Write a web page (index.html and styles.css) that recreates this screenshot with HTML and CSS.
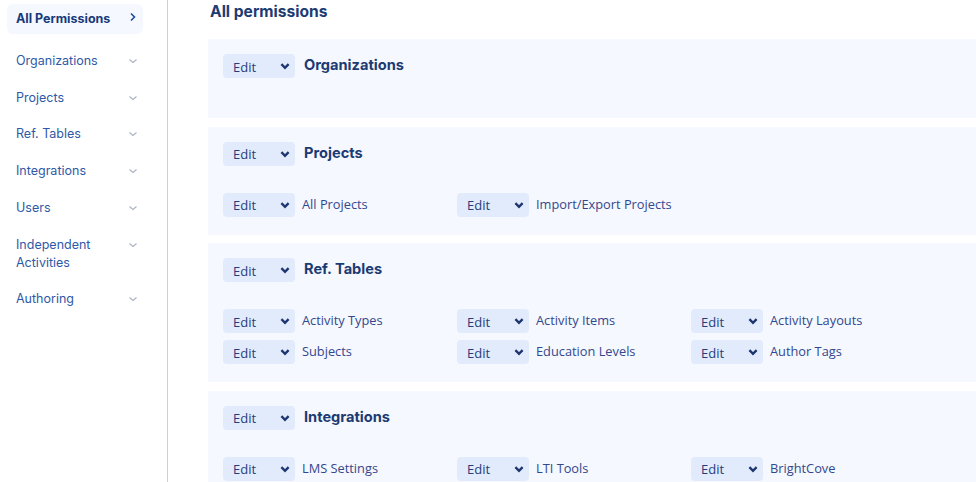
FILE: index.html
```html
<!DOCTYPE html>
<html>
<head>
<meta charset="utf-8">
<link rel="stylesheet" href="styles.css">
</head>
<body>
<div class="layout">
  <aside class="sidebar">
    <div class="nav-item active"><span>All Permissions</span><svg class="chev-r" viewBox="0 0 10 10"><path d="M3 1.5 L6.5 5 L3 8.5" /></svg></div>
    <div class="nav-item"><span>Organizations</span><svg class="chev-d" viewBox="0 0 10 10"><path d="M1.5 3.5 L5 6.5 L8.5 3.5" /></svg></div>
    <div class="nav-item"><span>Projects</span><svg class="chev-d" viewBox="0 0 10 10"><path d="M1.5 3.5 L5 6.5 L8.5 3.5" /></svg></div>
    <div class="nav-item"><span>Ref. Tables</span><svg class="chev-d" viewBox="0 0 10 10"><path d="M1.5 3.5 L5 6.5 L8.5 3.5" /></svg></div>
    <div class="nav-item"><span>Integrations</span><svg class="chev-d" viewBox="0 0 10 10"><path d="M1.5 3.5 L5 6.5 L8.5 3.5" /></svg></div>
    <div class="nav-item"><span>Users</span><svg class="chev-d" viewBox="0 0 10 10"><path d="M1.5 3.5 L5 6.5 L8.5 3.5" /></svg></div>
    <div class="nav-item"><span>Independent<br>Activities</span><svg class="chev-d" viewBox="0 0 10 10"><path d="M1.5 3.5 L5 6.5 L8.5 3.5" /></svg></div>
    <div class="nav-item"><span>Authoring</span><svg class="chev-d" viewBox="0 0 10 10"><path d="M1.5 3.5 L5 6.5 L8.5 3.5" /></svg></div>
  </aside>
  <main class="main">
    <h1 class="title">All permissions</h1>

    <section class="card card-empty">
      <div class="card-head">
        <div class="select"><span>Edit</span><svg viewBox="0 0 10 10"><path d="M2 3.5 L5 6.5 L8 3.5" /></svg></div>
        <h2>Organizations</h2>
      </div>
    </section>

    <section class="card">
      <div class="card-head">
        <div class="select"><span>Edit</span><svg viewBox="0 0 10 10"><path d="M2 3.5 L5 6.5 L8 3.5" /></svg></div>
        <h2>Projects</h2>
      </div>
      <div class="grid">
        <div class="perm"><div class="select"><span>Edit</span><svg viewBox="0 0 10 10"><path d="M2 3.5 L5 6.5 L8 3.5" /></svg></div><span class="label">All Projects</span></div>
        <div class="perm"><div class="select"><span>Edit</span><svg viewBox="0 0 10 10"><path d="M2 3.5 L5 6.5 L8 3.5" /></svg></div><span class="label">Import/Export Projects</span></div>
      </div>
    </section>

    <section class="card">
      <div class="card-head">
        <div class="select"><span>Edit</span><svg viewBox="0 0 10 10"><path d="M2 3.5 L5 6.5 L8 3.5" /></svg></div>
        <h2>Ref. Tables</h2>
      </div>
      <div class="grid">
        <div class="perm"><div class="select"><span>Edit</span><svg viewBox="0 0 10 10"><path d="M2 3.5 L5 6.5 L8 3.5" /></svg></div><span class="label">Activity Types</span></div>
        <div class="perm"><div class="select"><span>Edit</span><svg viewBox="0 0 10 10"><path d="M2 3.5 L5 6.5 L8 3.5" /></svg></div><span class="label">Activity Items</span></div>
        <div class="perm"><div class="select"><span>Edit</span><svg viewBox="0 0 10 10"><path d="M2 3.5 L5 6.5 L8 3.5" /></svg></div><span class="label">Activity Layouts</span></div>
        <div class="perm"><div class="select"><span>Edit</span><svg viewBox="0 0 10 10"><path d="M2 3.5 L5 6.5 L8 3.5" /></svg></div><span class="label">Subjects</span></div>
        <div class="perm"><div class="select"><span>Edit</span><svg viewBox="0 0 10 10"><path d="M2 3.5 L5 6.5 L8 3.5" /></svg></div><span class="label">Education Levels</span></div>
        <div class="perm"><div class="select"><span>Edit</span><svg viewBox="0 0 10 10"><path d="M2 3.5 L5 6.5 L8 3.5" /></svg></div><span class="label">Author Tags</span></div>
      </div>
    </section>

    <section class="card">
      <div class="card-head">
        <div class="select"><span>Edit</span><svg viewBox="0 0 10 10"><path d="M2 3.5 L5 6.5 L8 3.5" /></svg></div>
        <h2>Integrations</h2>
      </div>
      <div class="grid">
        <div class="perm"><div class="select"><span>Edit</span><svg viewBox="0 0 10 10"><path d="M2 3.5 L5 6.5 L8 3.5" /></svg></div><span class="label">LMS Settings</span></div>
        <div class="perm"><div class="select"><span>Edit</span><svg viewBox="0 0 10 10"><path d="M2 3.5 L5 6.5 L8 3.5" /></svg></div><span class="label">LTI Tools</span></div>
        <div class="perm"><div class="select"><span>Edit</span><svg viewBox="0 0 10 10"><path d="M2 3.5 L5 6.5 L8 3.5" /></svg></div><span class="label">BrightCove</span></div>
      </div>
    </section>
  </main>
</div>
</body>
</html>
```

FILE: styles.css
```css
* { box-sizing: border-box; }
html, body { margin: 0; padding: 0; background: #fff; }
body { width: 976px; height: 482px; overflow: hidden; font-family: "Inter", "Noto Sans", sans-serif; }

.layout { display: flex; align-items: stretch; height: 482px; }

.sidebar {
  width: 168px;
  flex: none;
  border-right: 1px solid #cfcfcf;
  padding: 4px 0 0 7px;
}
.nav-item {
  width: 136px;
  display: flex;
  justify-content: space-between;
  align-items: flex-start;
  padding: 9px 5px 10px 9px;
  font-size: 12.5px;
  line-height: 17.8px;
  color: #2e59a8;
}
.nav-item.active {
  background: #f5f8fe;
  border-radius: 6px;
  font-weight: 700;
  color: #173a7a;
  padding: 6px 5px 6px 9px;
  margin-bottom: 9px;
}
.nav-item svg { width: 10px; height: 10px; margin-top: 4px; fill: none; }
.chev-r { stroke: #1f4aa0; stroke-width: 1.6; margin-top: 2px !important; }
.chev-d { stroke: #a9b3c3; stroke-width: 1.1; }

.main { flex: 1; padding-left: 40px; min-width: 0; }
.title {
  margin: 0;
  font-size: 15.6px;
  line-height: 22px;
  font-weight: 700;
  color: #1d3b73;
  padding: 1px 0 0 2px;
  height: 39px;
}

.card {
  background: #f5f8ff;
  padding: 15px 15px 18px;
  margin-bottom: 8.5px;
  width: 800px;
}
.card-empty { padding-bottom: 40px; }

.card-head { display: flex; align-items: center; gap: 9px; }
.card-head h2 {
  margin: 0;
  font-size: 14.6px;
  line-height: 20px;
  font-weight: 700;
  color: #1d3b73;
  padding-bottom: 2px;
}

.select {
  width: 72px;
  height: 24px;
  flex: none;
  background: #e2ebfc;
  border-radius: 4px;
  display: flex;
  align-items: center;
  justify-content: space-between;
  padding: 0 4px 0 10px;
  font-family: "Open Sans", sans-serif;
  font-size: 13px;
  color: #263d7c;
}
.select span { padding-top: 1px; }
.select svg { width: 12px; height: 12px; fill: none; stroke: #1d3670; stroke-width: 2; }

.grid {
  margin-top: 27px;
  display: grid;
  grid-template-columns: repeat(3, 234px);
  row-gap: 7px;
}
.perm { display: flex; align-items: center; gap: 7px; }
.label {
  font-family: "Open Sans", sans-serif;
  font-size: 12.8px;
  color: #34478c;
  padding-bottom: 2px;
}
```
